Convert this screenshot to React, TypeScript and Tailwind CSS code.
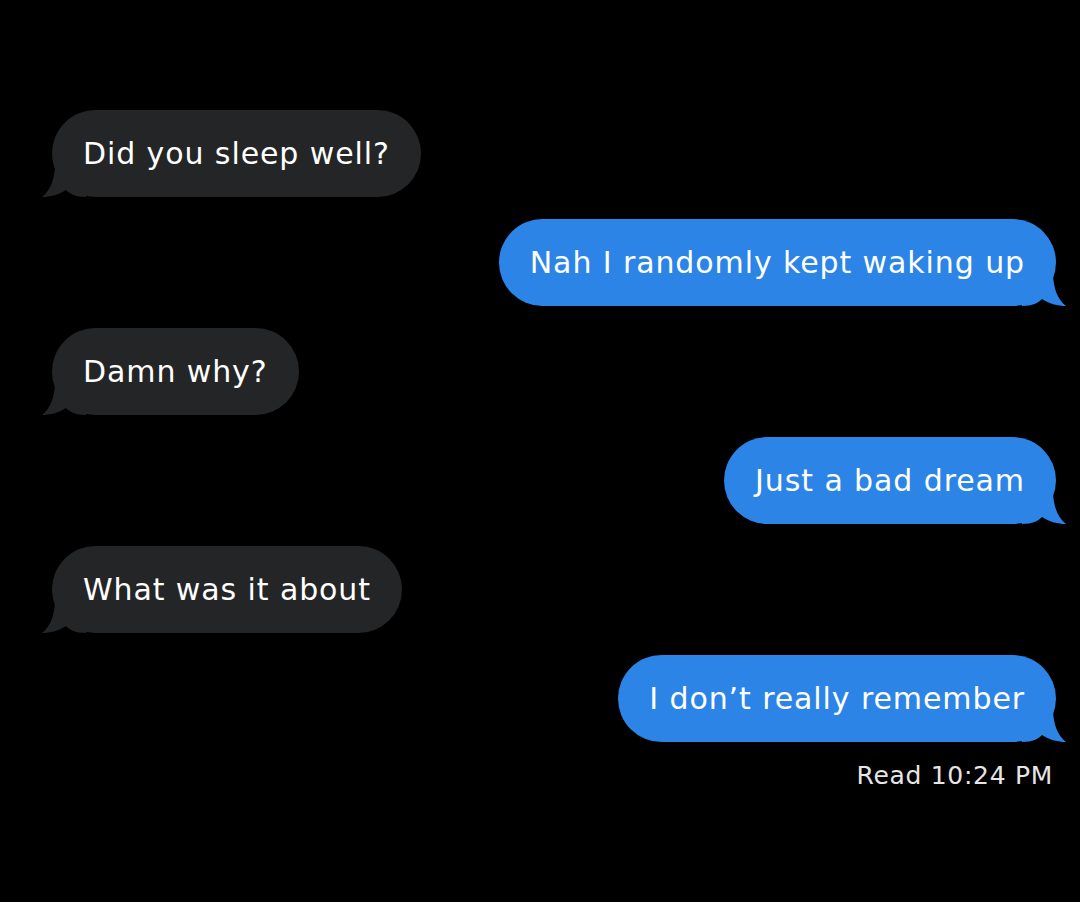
import React from "react";

type Msg = { text: string; me: boolean };

const messages: Msg[] = [
  { text: "Did you sleep well?", me: false },
  { text: "Nah I randomly kept waking up", me: true },
  { text: "Damn why?", me: false },
  { text: "Just a bad dream", me: true },
  { text: "What was it about", me: false },
  { text: "I don\u2019t really remember", me: true },
];

function Tail({ me }: { me: boolean }) {
  return (
    <svg
      viewBox="0 0 44 30"
      className={
        "absolute bottom-0 w-[44px] h-[30px] " +
        (me ? "right-[-10px] -scale-x-100 fill-[#2b84e6]" : "left-[-10px] fill-[#242526]")
      }
    >
      <path d="M13 0 C12 12 9 23 0 30 C8 30 16 28 24 23 C28 27 33 30 44 30 L44 0 Z" />
    </svg>
  );
}

function Bubble({ msg }: { msg: Msg }) {
  return (
    <div className={"flex " + (msg.me ? "justify-end pr-[24px]" : "justify-start pl-[52px]")}>
      <div
        className={
          "relative h-[87px] flex items-center px-[31px] rounded-[44px] text-[30px] tracking-[0.9px] text-white " +
          (msg.me ? "bg-[#2b84e6]" : "bg-[#242526]")
        }
      >
        <Tail me={msg.me} />
        <span className="relative">{msg.text}</span>
      </div>
    </div>
  );
}

export default function App() {
  return (
    <div
      className="w-[1080px] h-[902px] bg-black pt-[110px]"
      style={{ fontFamily: '"DejaVu Sans", Verdana, sans-serif' }}
    >
      <div className="flex flex-col gap-[22px]">
        {messages.map((m, i) => (
          <Bubble key={i} msg={m} />
        ))}
      </div>
      <div className="flex justify-end pr-[27px] pt-[15px] text-[25px] text-[#e6e6e6] tracking-[0.7px]">
        Read 10:24 PM
      </div>
    </div>
  );
}
